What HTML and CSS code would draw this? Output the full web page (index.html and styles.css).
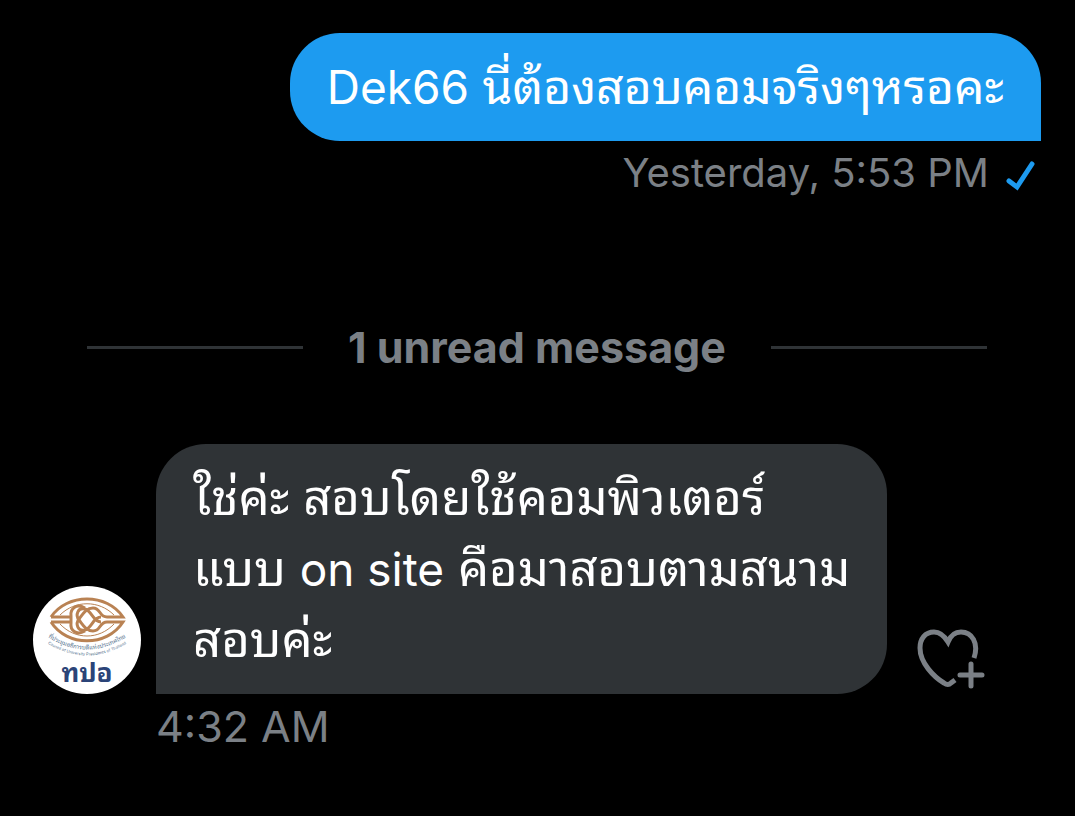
FILE: index.html
```html
<!DOCTYPE html>
<html lang="th">
<head>
  <meta charset="UTF-8">
  <meta name="viewport" content="width=device-width, initial-scale=1.0">
  <title>Messages</title>
  <link rel="stylesheet" href="styles.css">
</head>
<body>
  <main class="conversation">
    <div class="message sent">
      <div class="bubble"><span class="latin">Dek66</span> นี่ต้องสอบคอมจริงๆหรอคะ</div>
      <div class="meta">
        <time>Yesterday, 5:53 PM</time>
        <svg class="check" viewBox="0 0 30 30" aria-label="Sent">
          <path d="M3 20 L11 26 L26 3" />
        </svg>
      </div>
    </div>

    <div class="divider"><span>1 unread message</span></div>

    <div class="message received">
      <div class="row">
        <svg class="avatar" viewBox="0 0 108 108" role="img" aria-label="ทปอ">
          <circle cx="54" cy="54" r="54" fill="#fff" />
          <g class="emblem">
            <path d="M18 31 C34 7 74 7 90 31 H74 C66 31 68 22 60 22 C53 22 50 28 46 33 C42 38 45 46 52 44 C59 42 60 31 68 31" />
            <path d="M18 36 C34 61 74 61 90 36 H74 C66 36 68 45 60 45 C53 45 50 39 46 34 C42 29 45 21 52 23 C59 25 60 36 68 36" />
            <path d="M18 31 H39 M18 36 H39" />
            <path d="M52 22 C43 17 37 23 38 30 V37 C37 44 43 50 52 45" />
            <path class="thin" d="M27 29 C42 14 66 14 81 29 M27 38 C42 54 66 54 81 38" />
          </g>
          <path id="arc-top" d="M10 48 Q54 79 98 48" fill="none" />
          <path id="arc-bottom" d="M6 52 Q54 87 102 52" fill="none" />
          <text class="tiny"><textPath href="#arc-top" startOffset="50%">ที่ประชุมอธิการบดีแห่งประเทศไทย</textPath></text>
          <text class="tiny small"><textPath href="#arc-bottom" startOffset="50%">Council of University Presidents of Thailand</textPath></text>
          <text class="initials" x="54" y="96">ทปอ</text>
        </svg>
        <div class="bubble">ใช่ค่ะ สอบโดยใช้คอมพิวเตอร์<br>แบบ <span class="latin">on site</span> คือมาสอบตามสนาม<br>สอบค่ะ</div>
        <button class="react" type="button" aria-label="Add reaction">
          <svg viewBox="0 0 68 60">
            <path d="M57 29 C62 14 55 3 44 3 C37 3 33 8 31 13 C28 8 24 3 17 3 C8 3 3 10 3 19 C3 34 17 48 27 54 Q31 57 34 54 L38 51" />
            <path d="M54 35 V57 M43 46 H65" stroke-linecap="round" />
          </svg>
        </button>
      </div>
      <div class="meta"><time>4:32 AM</time></div>
    </div>
  </main>
</body>
</html>
```
FILE: styles.css
```css
* {
  box-sizing: border-box;
}

body {
  margin: 0;
  background-color: #000;
  color: #fff;
  font-family: Inter, "Noto Sans Thai Looped", "Noto Looped Thai", Loma, Garuda, Waree, Umpush, "Noto Sans Thai", sans-serif;
}

.conversation {
  padding: 33px 34px 33px 33px;
}

.message {
  display: flex;
  flex-direction: column;
}

.sent {
  align-items: flex-end;
}

.bubble {
  padding: 18px 37px 19px;
  font-size: 48px;
  line-height: 71px;
}

.latin {
  font-size: 46px;
  line-height: 1;
}

.sent .bubble {
  background-color: #1d9bf0;
  border-radius: 50px 50px 0 50px;
}

.received .bubble {
  background-color: #2f3336;
  border-radius: 50px 50px 50px 0;
  font-size: 49px;
}

.meta {
  display: flex;
  align-items: center;
  gap: 17px;
  color: #7b8086;
  line-height: 64px;
}

.sent .meta {
  padding-right: 5px;
  font-size: 40px;
}

.check {
  width: 30px;
  height: 30px;
  margin-top: 6px;
  fill: none;
  stroke: #1d9bf0;
  stroke-width: 5;
  stroke-linecap: round;
}

.divider {
  display: flex;
  align-items: center;
  gap: 45px;
  margin: 108px 54px 63px;
  color: #7b8086;
  font-size: 43px;
  font-weight: bold;
  line-height: 68px;
}

.divider::before,
.divider::after {
  content: "";
  flex: 1;
  height: 3px;
  background-color: #2f3336;
}

.row {
  display: flex;
  align-items: flex-end;
}

.avatar {
  flex: none;
  width: 108px;
  height: 108px;
  margin-right: 15px;
}

.emblem {
  fill: none;
  stroke: #b98253;
  stroke-width: 3;
}

.emblem .thin {
  stroke-width: 1;
}

.tiny {
  fill: #58748f;
  font-size: 6px;
  text-anchor: middle;
}

.tiny.small {
  font-size: 4px;
}

.initials {
  fill: #2b4478;
  font-size: 26px;
  font-weight: bold;
  text-anchor: middle;
}

.received .meta {
  padding-left: 123px;
  font-size: 43px;
}

.react {
  margin: 0 0 5px 30px;
  padding: 0;
  border: none;
  background: none;
  cursor: pointer;
}

.react svg {
  display: block;
  width: 68px;
  height: 60px;
  fill: none;
  stroke: #7b8086;
  stroke-width: 5;
}
```
